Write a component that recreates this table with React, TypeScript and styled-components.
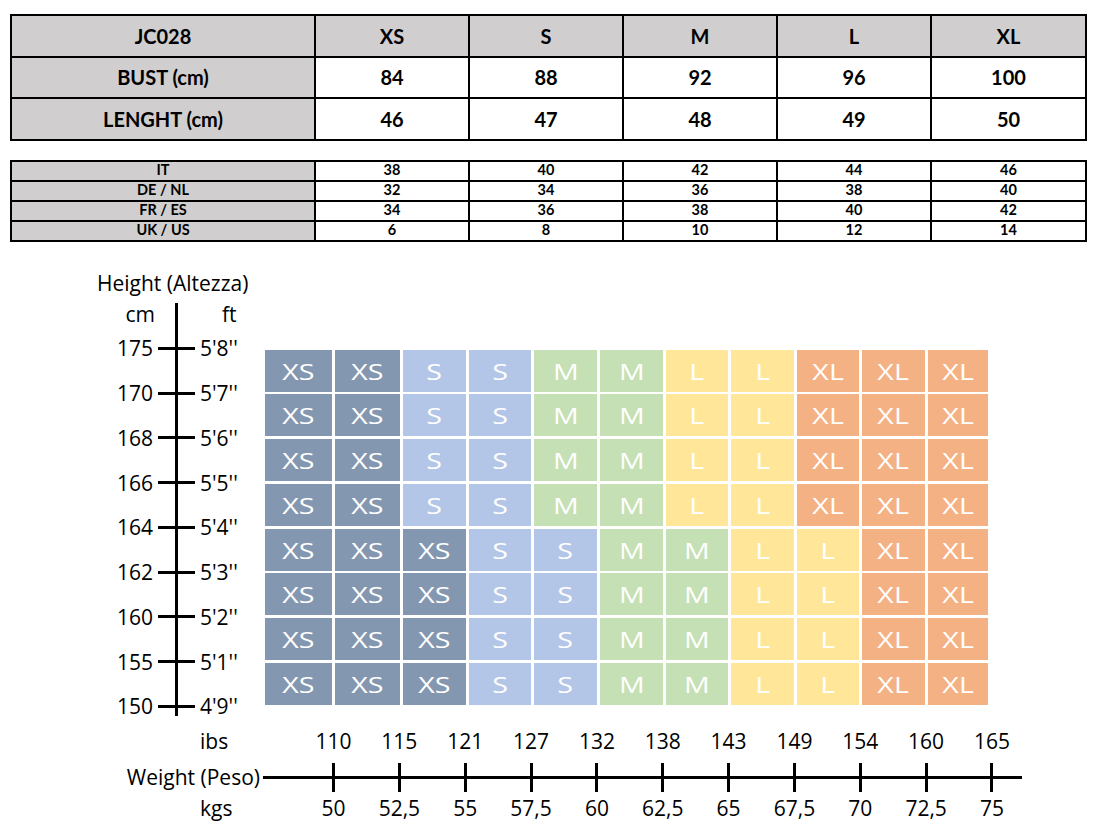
import React from "react";
import styled, { createGlobalStyle } from "styled-components";

const Global = createGlobalStyle`
  html, body { margin: 0; padding: 0; background: #ffffff; }
  body { font-family: "Open Sans", "DejaVu Sans", sans-serif; color: #000000; }
`;

const Page = styled.div`
  width: 1102px;
  height: 833px;
  overflow: hidden;
  box-sizing: border-box;
  padding-top: 14px;
  background: #ffffff;
`;

/* ---------- tables ---------- */

const Table = styled.table<{ $rowH: number; $font: number; $gap?: number }>`
  border-collapse: collapse;
  table-layout: fixed;
  width: 1075px;
  margin: ${(p) => p.$gap ?? 0}px 0 0 10px;
  font-family: Lato, "Open Sans", sans-serif;
  font-weight: 700;
  font-size: ${(p) => p.$font}px;
  tr {
    height: ${(p) => p.$rowH}px;
  }
`;

const Col = styled.col<{ $w: number }>`
  width: ${(p) => p.$w}px;
`;

const Cell = styled.td<{ $shade?: boolean }>`
  border: 2px solid #000000;
  padding: 0;
  text-align: center;
  vertical-align: middle;
  line-height: 1;
  background: ${(p) => (p.$shade ? "#d0cece" : "#ffffff")};
`;

/* ---------- chart ---------- */

const Chart = styled.div`
  display: flex;
  align-items: flex-start;
  margin-top: 29px;
`;

const HeightAxis = styled.div`
  width: 265px;
  flex: none;
  font-size: 21px;
  line-height: 24px;
`;

const AxisTitle = styled.div`
  height: 24px;
  padding-left: 97px;
  white-space: nowrap;
`;

const AxisBody = styled.div`
  margin-top: 8px;
  display: grid;
  grid-template-columns: 153px 37px 1fr;
  column-gap: 5px;
  grid-template-rows: 23.6px repeat(9, 44.75px);
`;

const AxisLine = styled.div`
  grid-column: 2;
  grid-row: 1 / -1;
  justify-self: center;
  width: 3px;
  margin-bottom: 13px;
  background: #000000;
`;

const HTick = styled.div<{ $row: number }>`
  grid-column: 2;
  grid-row: ${(p) => p.$row};
  align-self: center;
  height: 3px;
  background: #000000;
`;

const CmLabel = styled.div<{ $row: number; $shift?: number }>`
  grid-column: 1;
  grid-row: ${(p) => p.$row};
  align-self: center;
  text-align: right;
  margin-right: ${(p) => p.$shift ?? 0}px;
  white-space: nowrap;
`;

const FtLabel = styled.div<{ $row: number; $indent?: number }>`
  grid-column: 3;
  grid-row: ${(p) => p.$row};
  align-self: center;
  padding-left: ${(p) => p.$indent ?? 0}px;
  white-space: nowrap;
`;

type Size = "XS" | "S" | "M" | "L" | "XL";

const SIZE_COLORS: Record<Size, string> = {
  XS: "#8497b0",
  S: "#b4c6e7",
  M: "#c5e0b4",
  L: "#ffe699",
  XL: "#f4b183",
};

const Matrix = styled.div`
  margin-top: 79px;
  display: grid;
  grid-template-columns: 67px 65px 63px 62px 63px 63px 62px 63px 62px 63px 60px;
  grid-auto-rows: 42px;
  column-gap: 3px;
  row-gap: 2.75px;
`;

const SizeCell = styled.div<{ $size: Size }>`
  background: ${(p) => SIZE_COLORS[p.$size]};
  display: flex;
  align-items: center;
  justify-content: center;
  color: #ffffff;
  font-size: 22px;
  line-height: 1;
`;

const CellLabel = styled.span`
  display: inline-block;
  transform: scaleX(1.3);
`;

/* ---------- weight axis ---------- */

const WeightAxis = styled.div`
  display: grid;
  grid-template-columns: 263px 37.6px repeat(11, 65.85px);
  grid-template-rows: 34px 29px 28px;
  font-size: 21px;
  line-height: 24px;
`;

const WeightLine = styled.div`
  grid-column: 2 / -1;
  grid-row: 2;
  align-self: center;
  height: 3px;
  margin-right: 3px;
  background: #000000;
`;

const VTick = styled.div<{ $col: number }>`
  grid-column: ${(p) => p.$col};
  grid-row: 2;
  justify-self: center;
  width: 3px;
  background: #000000;
`;

const WeightTitle = styled.div`
  grid-column: 1;
  grid-row: 2;
  align-self: center;
  text-align: right;
  padding-right: 3px;
  white-space: nowrap;
`;

const UnitLabel = styled.div<{ $row: number; $end?: boolean }>`
  grid-column: 1;
  grid-row: ${(p) => p.$row};
  align-self: ${(p) => (p.$end ? "end" : "start")};
  padding-left: 200px;
`;

const TickValue = styled.div<{ $col: number; $row: number; $end?: boolean }>`
  grid-column: ${(p) => p.$col};
  grid-row: ${(p) => p.$row};
  align-self: ${(p) => (p.$end ? "end" : "start")};
  text-align: center;
  white-space: nowrap;
`;

/* ---------- data ---------- */

const SIZES = ["XS", "S", "M", "L", "XL"];
const MEASURES = [
  { label: "BUST (cm)", values: ["84", "88", "92", "96", "100"] },
  { label: "LENGHT (cm)", values: ["46", "47", "48", "49", "50"] },
];
const CONVERSIONS = [
  { label: "IT", values: ["38", "40", "42", "44", "46"] },
  { label: "DE / NL", values: ["32", "34", "36", "38", "40"] },
  { label: "FR / ES", values: ["34", "36", "38", "40", "42"] },
  { label: "UK / US", values: ["6", "8", "10", "12", "14"] },
];

const HEIGHTS = [
  ["175", "5'8''"],
  ["170", "5'7''"],
  ["168", "5'6''"],
  ["166", "5'5''"],
  ["164", "5'4''"],
  ["162", "5'3''"],
  ["160", "5'2''"],
  ["155", "5'1''"],
  ["150", "4'9''"],
];

const TOP_ROW: Size[] = ["XS", "XS", "S", "S", "M", "M", "L", "L", "XL", "XL", "XL"];
const BOTTOM_ROW: Size[] = ["XS", "XS", "XS", "S", "S", "M", "M", "L", "L", "XL", "XL"];
const GRID: Size[][] = [TOP_ROW, TOP_ROW, TOP_ROW, TOP_ROW, BOTTOM_ROW, BOTTOM_ROW, BOTTOM_ROW, BOTTOM_ROW];

const LBS = ["110", "115", "121", "127", "132", "138", "143", "149", "154", "160", "165"];
const KGS = ["50", "52,5", "55", "57,5", "60", "62,5", "65", "67,5", "70", "72,5", "75"];

const COL_WIDTHS = [304, 154, 154, 154, 154, 155];

function ColGroup() {
  return (
    <colgroup>
      {COL_WIDTHS.map((w, i) => (
        <Col key={i} $w={w} />
      ))}
    </colgroup>
  );
}

export default function App() {
  return (
    <>
      <Global />
      <Page>
        <Table $rowH={41.5} $font={20}>
          <ColGroup />
          <tbody>
            <tr>
              <Cell $shade>JC028</Cell>
              {SIZES.map((s) => (
                <Cell key={s} $shade>
                  {s}
                </Cell>
              ))}
            </tr>
            {MEASURES.map((m) => (
              <tr key={m.label}>
                <Cell $shade>{m.label}</Cell>
                {m.values.map((v, i) => (
                  <Cell key={i}>{v}</Cell>
                ))}
              </tr>
            ))}
          </tbody>
        </Table>

        <Table $rowH={20} $font={14.5} $gap={19}>
          <ColGroup />
          <tbody>
            {CONVERSIONS.map((c) => (
              <tr key={c.label}>
                <Cell $shade>{c.label}</Cell>
                {c.values.map((v, i) => (
                  <Cell key={i}>{v}</Cell>
                ))}
              </tr>
            ))}
          </tbody>
        </Table>

        <Chart>
          <HeightAxis>
            <AxisTitle>Height (Altezza)</AxisTitle>
            <AxisBody>
              <AxisLine />
              <CmLabel $row={1} $shift={-2}>
                cm
              </CmLabel>
              <FtLabel $row={1} $indent={22}>
                ft
              </FtLabel>
              {HEIGHTS.map(([cm, ft], i) => (
                <React.Fragment key={cm}>
                  <CmLabel $row={i + 2}>{cm}</CmLabel>
                  <HTick $row={i + 2} />
                  <FtLabel $row={i + 2}>{ft}</FtLabel>
                </React.Fragment>
              ))}
            </AxisBody>
          </HeightAxis>

          <Matrix>
            {GRID.map((row, r) =>
              row.map((s, c) => (
                <SizeCell key={`${r}-${c}`} $size={s}>
                  <CellLabel>{s}</CellLabel>
                </SizeCell>
              ))
            )}
          </Matrix>
        </Chart>

        <WeightAxis>
          <UnitLabel $row={1}>ibs</UnitLabel>
          <WeightTitle>Weight (Peso)</WeightTitle>
          <UnitLabel $row={3} $end>
            kgs
          </UnitLabel>
          <WeightLine />
          {LBS.map((v, i) => (
            <React.Fragment key={v}>
              <TickValue $col={i + 3} $row={1}>
                {v}
              </TickValue>
              <VTick $col={i + 3} />
              <TickValue $col={i + 3} $row={3} $end>
                {KGS[i]}
              </TickValue>
            </React.Fragment>
          ))}
        </WeightAxis>
      </Page>
    </>
  );
}
